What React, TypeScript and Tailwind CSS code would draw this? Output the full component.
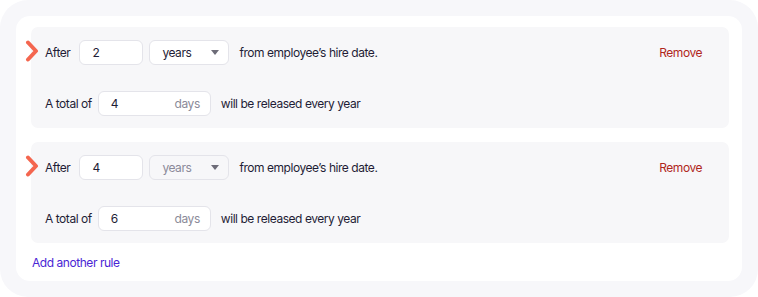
import React from 'react';

type Rule = { after: string; unit: string; days: string; locked: boolean };

const rules: Rule[] = [
  { after: '2', unit: 'years', days: '4', locked: false },
  { after: '4', unit: 'years', days: '6', locked: true },
];

function Chevron() {
  return (
    <svg width="14" height="22" viewBox="0 0 14 22" className="absolute left-[-20px] top-[0px]">
      <path d="M3 2.5 L11 11 L3 19.5" fill="none" stroke="#f4664f" strokeWidth="4" strokeLinecap="round" strokeLinejoin="round" />
    </svg>
  );
}

function RuleCard({ rule }: { rule: Rule }) {
  return (
    <div className="relative bg-[#f7f7f9] rounded-[7px] pl-[14px] pr-[27px] pt-[13px] pb-[12px]">
      <div className="relative flex items-center h-[25px]">
        <Chevron />
        <span>After</span>
        <div className="ml-[9px] w-[64px] h-[25px] bg-white border border-[#e4e4ea] rounded-[6px] flex items-center pl-[12px]">
          {rule.after}
        </div>
        <div
          className={`ml-[6px] w-[80px] h-[25px] border border-[#e4e4ea] rounded-[6px] flex items-center justify-between pl-[12px] pr-[9px] ${
            rule.locked ? 'bg-[#f7f7f9] text-[#8b8a99]' : 'bg-white'
          }`}
        >
          <span>{rule.unit}</span>
          <svg width="8" height="5" viewBox="0 0 8 5">
            <path d="M0 0 L8 0 L4 5 Z" fill="#6d6c78" />
          </svg>
        </div>
        <span className="ml-[10px]">from employee’s hire date.</span>
        <button className="ml-auto text-[#b0261c]">Remove</button>
      </div>
      <div className="flex items-center h-[25px] mt-[26px]">
        <span>A total of</span>
        <div className="ml-[6px] w-[113px] h-[25px] bg-white border border-[#e4e4ea] rounded-[6px] flex items-center justify-between pl-[12px] pr-[10px]">
          <span>{rule.days}</span>
          <span className="text-[#8b8a99]">days</span>
        </div>
        <span className="ml-[10px]">will be released every year</span>
      </div>
    </div>
  );
}

export default function App() {
  return (
    <div
      className="w-[758px] h-[297px] bg-[#f7f7fa] rounded-[28px] pt-[16px] pl-[16px] pr-[16px] text-[12px] tracking-[-0.45px] text-[#1f1d36]"
      style={{ fontFamily: 'Inter, "Liberation Sans", sans-serif' }}
    >
      <div className="bg-white rounded-[14px] h-[265px] pt-[11px] pl-[15px] pr-[13px]">
        <div className="flex flex-col gap-[14px]">
          {rules.map((r, i) => (
            <RuleCard key={i} rule={r} />
          ))}
        </div>
        <button className="mt-[12px] ml-[1px] text-[#4a25d4] leading-[16px]">Add another rule</button>
      </div>
    </div>
  );
}
